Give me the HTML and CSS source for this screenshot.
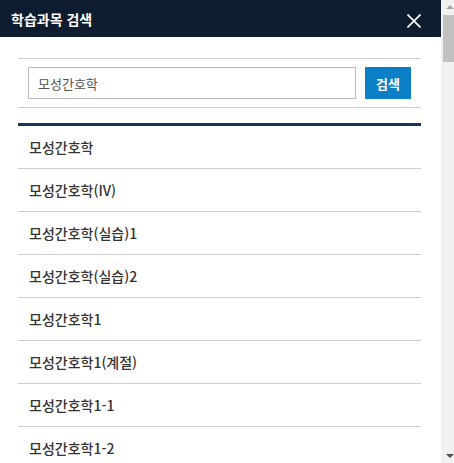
FILE: index.html
```html
<!DOCTYPE html>
<html lang="ko">
<head>
<meta charset="utf-8">
<title>학습과목 검색</title>
<link rel="stylesheet" href="styles.css">
</head>
<body>
<div class="popup">
  <header class="popup-head">
    <h1 class="popup-title">학습과목 검색</h1>
    <button class="close-btn" type="button" aria-label="닫기">
      <svg width="14" height="14" viewBox="0 0 14 14"><path d="M0.5 0.5 L13.5 13.5 M13.5 0.5 L0.5 13.5" stroke="#fff" stroke-width="1.6" fill="none"/></svg>
    </button>
  </header>
  <div class="popup-body">
    <form class="search-box">
      <input class="search-input" type="text" value="모성간호학">
      <button class="search-btn" type="button">검색</button>
    </form>
    <ul class="result-list">
      <li class="result-item">모성간호학</li>
      <li class="result-item">모성간호학(IV)</li>
      <li class="result-item">모성간호학(실습)1</li>
      <li class="result-item">모성간호학(실습)2</li>
      <li class="result-item">모성간호학1</li>
      <li class="result-item">모성간호학1(계절)</li>
      <li class="result-item">모성간호학1-1</li>
      <li class="result-item">모성간호학1-2</li>
      <li class="result-item">모성간호학2</li>
      <li class="result-item">모성간호학2(계절)</li>
    </ul>
  </div>
</div>
<div class="scrollbar" aria-hidden="true">
  <span class="sb-arrow sb-up"></span>
  <div class="sb-track"><span class="sb-thumb"></span></div>
  <span class="sb-arrow sb-down"></span>
</div>
</body>
</html>
```
FILE: styles.css
```css
* { box-sizing: border-box; }
html, body { margin: 0; padding: 0; }
body {
  font-family: "Noto Sans CJK KR", "Noto Sans", sans-serif;
  color: #333;
  background: #fff;
  display: flex;
  height: 100vh;
  overflow: hidden;
}
.popup {
  flex: 1;
  min-width: 0;
  overflow: hidden;
}
.popup-head {
  height: 37px;
  background: #0e1c30;
  display: flex;
  align-items: center;
  justify-content: space-between;
  padding: 0 20px 0 11px;
}
.popup-title {
  margin: 0;
  font-size: 14px;
  font-weight: 700;
  color: #fff;
  line-height: 1;
}
.close-btn {
  background: none;
  border: 0;
  padding: 0;
  width: 14px;
  height: 14px;
  display: block;
  margin-top: 4px;
}
.close-btn svg { display: block; }
.popup-body {
  padding: 21px 20px 0 18px;
}
.search-box {
  margin: 0;
  border-top: 1px solid #cfcfcf;
  border-bottom: 1px solid #cfcfcf;
  padding: 8px 10px;
  display: flex;
  gap: 9px;
}
.search-input {
  flex: 1;
  min-width: 0;
  height: 32px;
  border: 1px solid #bbb;
  padding: 0 9px;
  font-family: inherit;
  font-size: 13px;
  color: #555;
  outline: none;
}
.search-btn {
  width: 46px;
  height: 32px;
  border: 0;
  background: #0a7fc6;
  color: #fff;
  font-family: inherit;
  font-size: 13px;
  font-weight: 700;
  padding: 0;
}
.result-list {
  list-style: none;
  margin: 15px 0 0;
  padding: 0;
  border-top: 3px solid #17345c;
}
.result-item {
  height: 43px;
  border-bottom: 1px solid #cfcfcf;
  padding: 0 11px;
  display: flex;
  align-items: center;
  font-size: 14px;
  font-weight: 500;
  color: #333;
}
.scrollbar {
  width: 13px;
  flex: none;
  background: #f1f1f1;
  display: flex;
  flex-direction: column;
  align-items: center;
}
.sb-arrow {
  display: block;
  width: 0;
  height: 0;
  border-left: 4px solid transparent;
  border-right: 4px solid transparent;
  margin-left: 4px;
}
.sb-up {
  margin-top: 5px;
  border-bottom: 4px solid #a3a3a3;
}
.sb-down {
  margin-bottom: 5px;
  border-top: 4px solid #505050;
}
.sb-track {
  flex: 1;
  width: 100%;
  padding: 6px 0 0 2px;
}
.sb-thumb {
  display: block;
  width: 11px;
  height: 47px;
  background: #c1c1c1;
}
```
